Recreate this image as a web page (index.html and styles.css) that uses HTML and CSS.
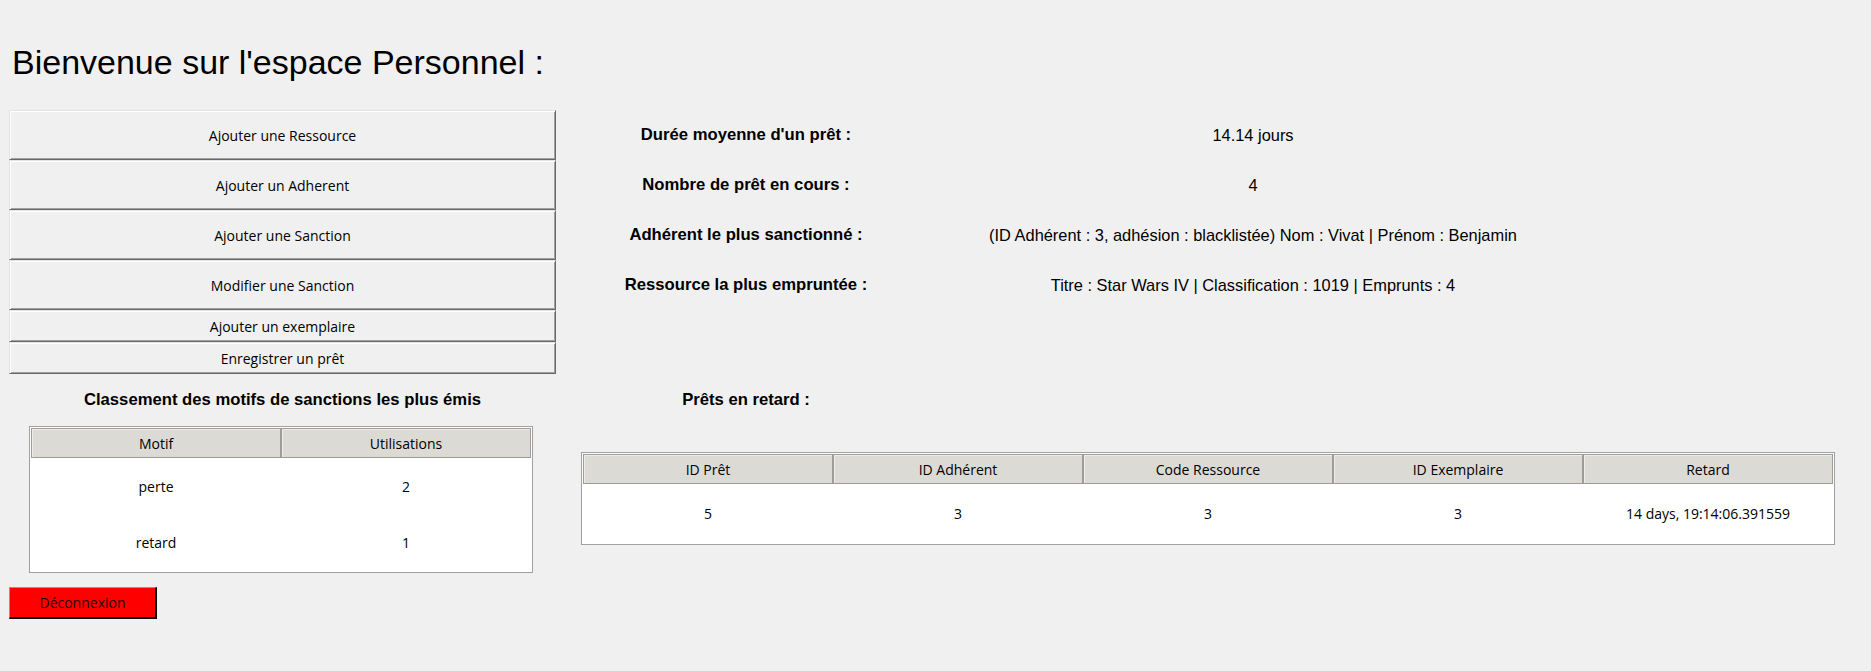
FILE: index.html
```html
<!DOCTYPE html>
<html lang="fr">
<head>
<meta charset="utf-8">
<title>Espace Personnel</title>
<link rel="stylesheet" href="styles.css">
</head>
<body>
<h1 class="title">Bienvenue sur l'espace Personnel :</h1>
<div class="main">
  <button class="btn r1">Ajouter une Ressource</button>
  <button class="btn r2">Ajouter un Adherent</button>
  <button class="btn r3">Ajouter une Sanction</button>
  <button class="btn r4">Modifier une Sanction</button>
  <button class="btn r5">Ajouter un exemplaire</button>
  <button class="btn r6">Enregistrer un prêt</button>

  <div class="label r1">Durée moyenne d'un prêt :</div>
  <div class="value r1">14.14 jours</div>
  <div class="label r2">Nombre de prêt en cours :</div>
  <div class="value r2">4</div>
  <div class="label r3">Adhérent le plus sanctionné :</div>
  <div class="value r3">(ID Adhérent : 3, adhésion : blacklistée) Nom : Vivat | Prénom : Benjamin</div>
  <div class="label r4">Ressource la plus empruntée :</div>
  <div class="value r4">Titre : Star Wars IV | Classification : 1019 | Emprunts : 4</div>

  <div class="caption left r7">Classement des motifs de sanctions les plus émis</div>
  <div class="label r7">Prêts en retard :</div>

  <div class="tree motif r8">
    <table>
      <thead><tr><th>Motif</th><th>Utilisations</th></tr></thead>
      <tbody>
        <tr><td>perte</td><td>2</td></tr>
        <tr><td>retard</td><td>1</td></tr>
      </tbody>
    </table>
  </div>

  <div class="tree late r8">
    <table>
      <thead><tr><th>ID Prêt</th><th>ID Adhérent</th><th>Code Ressource</th><th>ID Exemplaire</th><th>Retard</th></tr></thead>
      <tbody>
        <tr><td>5</td><td>3</td><td>3</td><td>3</td><td>14 days, 19:14:06.391559</td></tr>
      </tbody>
    </table>
  </div>

  <button class="logout r9">Déconnexion</button>
</div>
</body>
</html>
```

FILE: styles.css
```css
html, body {
  margin: 0;
  padding: 0;
  background: #f0f0f0;
  color: #000;
}

body {
  width: 1871px;
  height: 671px;
  overflow: hidden;
}

.title {
  margin: 0;
  padding: 44px 0 0 12px;
  font-family: "Liberation Sans", Arial, sans-serif;
  font-weight: normal;
  font-size: 34px;
  line-height: 37px;
  color: #000;
}

.main {
  margin: 29px 0 0 9px;
  display: grid;
  grid-template-columns: 547px 380px 634px 1fr;
  grid-template-rows: 50px 50px 50px 50px 32px 32px 52px 147px auto;
}

.r1 { grid-row: 1; }
.r2 { grid-row: 2; }
.r3 { grid-row: 3; }
.r4 { grid-row: 4; }
.r5 { grid-row: 5; }
.r6 { grid-row: 6; }
.r7 { grid-row: 7; }
.r8 { grid-row: 8; }
.r9 { grid-row: 9; }

.btn {
  grid-column: 1;
  margin: 0;
  padding: 0;
  background: #f0f0f0;
  border-top: 1px solid #e3e3e3;
  border-left: 1px solid #e3e3e3;
  border-right: 1px solid #696969;
  border-bottom: 1px solid #696969;
  box-shadow: inset 1px 1px 0 #ffffff, inset -1px -1px 0 #a0a0a0;
  font-family: "Segoe UI", "Open Sans", sans-serif;
  font-size: 14px;
  color: #000;
  text-align: center;
}

.label {
  grid-column: 2;
  display: flex;
  align-items: center;
  justify-content: center;
  font-family: "Liberation Sans", Arial, sans-serif;
  font-weight: bold;
  font-size: 16.67px;
}

.value {
  grid-column: 3;
  display: flex;
  align-items: center;
  justify-content: center;
  white-space: nowrap;
  font-family: "Liberation Sans", Arial, sans-serif;
  font-size: 16.4px;
}

.caption.left {
  grid-column: 1;
  display: flex;
  align-items: center;
  justify-content: center;
  font-family: "Liberation Sans", Arial, sans-serif;
  font-weight: bold;
  font-size: 16.67px;
}

.tree {
  border: 1px solid #a0a0a0;
  padding: 1px;
  background: #ffffff;
  box-sizing: border-box;
}

.tree table {
  width: 100%;
  border-collapse: separate;
  border-spacing: 0;
  table-layout: fixed;
  font-family: "Segoe UI", "Open Sans", sans-serif;
  font-size: 14px;
  color: #000;
}

.tree th {
  height: 30px;
  padding: 0;
  box-sizing: border-box;
  background: #dcdad5;
  border: 1px solid #9f9c95;
  box-shadow: inset 1px 1px 0 #eeede9;
  font-weight: normal;
  text-align: center;
}

.tree td {
  padding: 0;
  text-align: center;
  background: #ffffff;
}

.motif {
  grid-column: 1;
  margin-left: 20px;
  width: 504px;
  height: 147px;
}

.motif td {
  height: 56.5px;
}

.late {
  grid-column: 2 / span 3;
  margin: 26px 0 0 25px;
  width: 1254px;
  height: 93px;
  align-self: start;
}

.late td {
  height: 59px;
}

.logout {
  grid-column: 1;
  justify-self: start;
  margin: 14px 0 0 0;
  width: 148px;
  height: 32px;
  padding: 0;
  background: #ff0000;
  border-top: 1px solid #ff6a6a;
  border-left: 1px solid #ff6a6a;
  border-right: 2px solid #000;
  border-bottom: 2px solid #000;
  font-family: "Segoe UI", "Open Sans", sans-serif;
  font-size: 14px;
  color: #1a0000;
}
```
